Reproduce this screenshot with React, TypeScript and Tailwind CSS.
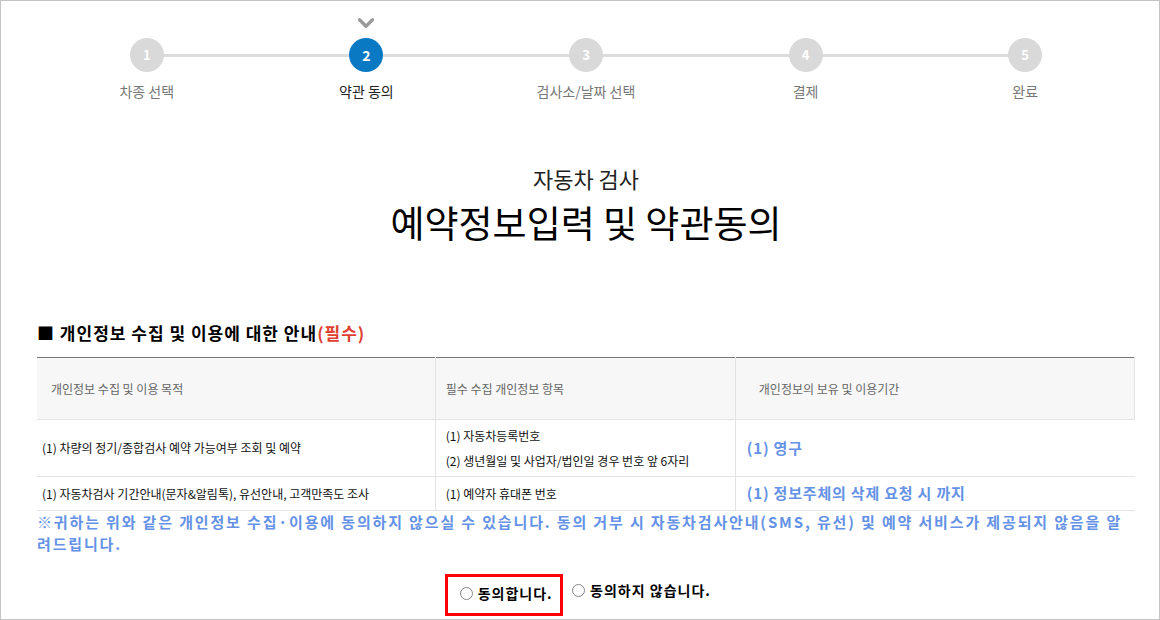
import { ChevronDown } from "lucide-react";

const steps = [
  { n: 1, label: "차종 선택" },
  { n: 2, label: "약관 동의" },
  { n: 3, label: "검사소/날짜 선택" },
  { n: 4, label: "결제" },
  { n: 5, label: "완료" },
];

const font = { fontFamily: '"Noto Sans CJK KR", "Noto Sans", sans-serif' };

function Stepper({ current }: { current: number }) {
  return (
    <div className="relative grid grid-cols-5 pt-[14px]">
      <div className="absolute left-[110px] right-[110px] top-[53px] h-[3px] bg-[#dcdcdc]" />
      {steps.map((s) => {
        const active = s.n === current;
        return (
          <div key={s.n} className="relative flex flex-col items-center">
            <div className="flex h-[16px] items-center justify-center">
              {active && <ChevronDown size={26} strokeWidth={3} className="text-[#999]" />}
            </div>
            <div
              className={
                active
                  ? "mt-[7px] flex h-[34px] w-[34px] items-center justify-center rounded-full bg-[#0a79c3] text-[14px] font-bold text-white"
                  : "mt-[7px] flex h-[34px] w-[34px] items-center justify-center rounded-full bg-[#d9d9d9] text-[13px] font-bold text-white"
              }
            >
              {s.n}
            </div>
            <div
              className={
                active
                  ? "mt-[10px] text-[14px] leading-[18px] text-[#222]"
                  : "mt-[10px] text-[14px] leading-[18px] text-[#777]"
              }
            >
              {s.label}
            </div>
          </div>
        );
      })}
    </div>
  );
}

function Radio({ label }: { label: string }) {
  return (
    <label className="flex items-center gap-[5px] text-[14px] font-bold tracking-[1px] text-black">
      <span className="inline-block h-[13px] w-[13px] rounded-full border border-[#888] bg-white" />
      {label}
    </label>
  );
}

export default function App() {
  return (
    <div
      className="h-[620px] w-full overflow-hidden border border-[#c4c4c4] bg-white"
      style={font}
    >
      <div className="pl-[36px] pr-[24px]">
        <Stepper current={2} />

        <div className="mt-[64px] text-center">
          <p className="text-[22px] leading-[28px] text-[#222]">자동차 검사</p>
          <h1 className="mt-[7px] text-[37px] leading-[46px] text-black">
            예약정보입력 및 약관동의
          </h1>
        </div>

        <h2 className="mt-[76px] text-[17px] font-bold leading-[24px] tracking-[1px] text-black">
          ■ 개인정보 수집 및 이용에 대한 안내<span className="text-[#e0402f]">(필수)</span>
        </h2>

        <table className="mt-[12px] w-full table-fixed border-collapse text-[12px]">
          <colgroup>
            <col className="w-[398px]" />
            <col className="w-[300px]" />
            <col className="w-[399px]" />
          </colgroup>
          <thead>
            <tr className="h-[62px] border-t border-t-[#777] bg-[#f7f7f7] text-[12px] text-[#666]">
              <th className="border-b border-r border-[#e3e3e3] pl-[14px] text-left font-normal">
                개인정보 수집 및 이용 목적
              </th>
              <th className="border-b border-r border-[#e3e3e3] pl-[10px] text-left font-normal">
                필수 수집 개인정보 항목
              </th>
              <th className="border-b border-r border-[#e3e3e3] pl-[23px] text-left font-normal">
                개인정보의 보유 및 이용기간
              </th>
            </tr>
          </thead>
          <tbody className="text-[#111]">
            <tr className="h-[57px] border-b border-[#e3e3e3]">
              <td className="border-r border-[#e3e3e3] pl-[5px]">
                (1) 차량의 정기/종합검사 예약 가능여부 조회 및 예약
              </td>
              <td className="border-r border-[#e3e3e3] pl-[10px] leading-[25px]">
                <div>(1) 자동차등록번호</div>
                <div>(2) 생년월일 및 사업자/법인일 경우 번호 앞 6자리</div>
              </td>
              <td className="pl-[11px] text-[15px] font-bold tracking-[0.8px] text-[#6592e6]">
                (1) 영구
              </td>
            </tr>
            <tr className="h-[34px] border-b border-[#e3e3e3]">
              <td className="border-r border-[#e3e3e3] pl-[5px]">
                (1) 자동차검사 기간안내(문자&amp;알림톡), 유선안내, 고객만족도 조사
              </td>
              <td className="border-r border-[#e3e3e3] pl-[10px]">(1) 예약자 휴대폰 번호</td>
              <td className="pl-[11px] text-[15px] font-bold tracking-[0.8px] text-[#6592e6]">
                (1) 정보주체의 삭제 요청 시 까지
              </td>
            </tr>
          </tbody>
        </table>

        <p className="text-[15px] font-bold leading-[22px] tracking-[1.85px] text-[#6592e6]">
          ※귀하는 위와 같은 개인정보 수집·이용에 동의하지 않으실 수 있습니다. 동의 거부 시
          자동차검사안내(SMS, 유선) 및 예약 서비스가 제공되지 않음을 알려드립니다.
        </p>

        <div className="mt-[19px] flex items-center justify-center gap-[9px] pr-[16px]">
          <div className="flex h-[42px] w-[118px] items-start justify-center border-[3px] border-[#ff0000] pt-[6px] pl-[4px]">
            <Radio label="동의합니다." />
          </div>
          <div className="flex h-[42px] items-start pt-[6px]">
            <Radio label="동의하지 않습니다." />
          </div>
        </div>
      </div>
    </div>
  );
}
